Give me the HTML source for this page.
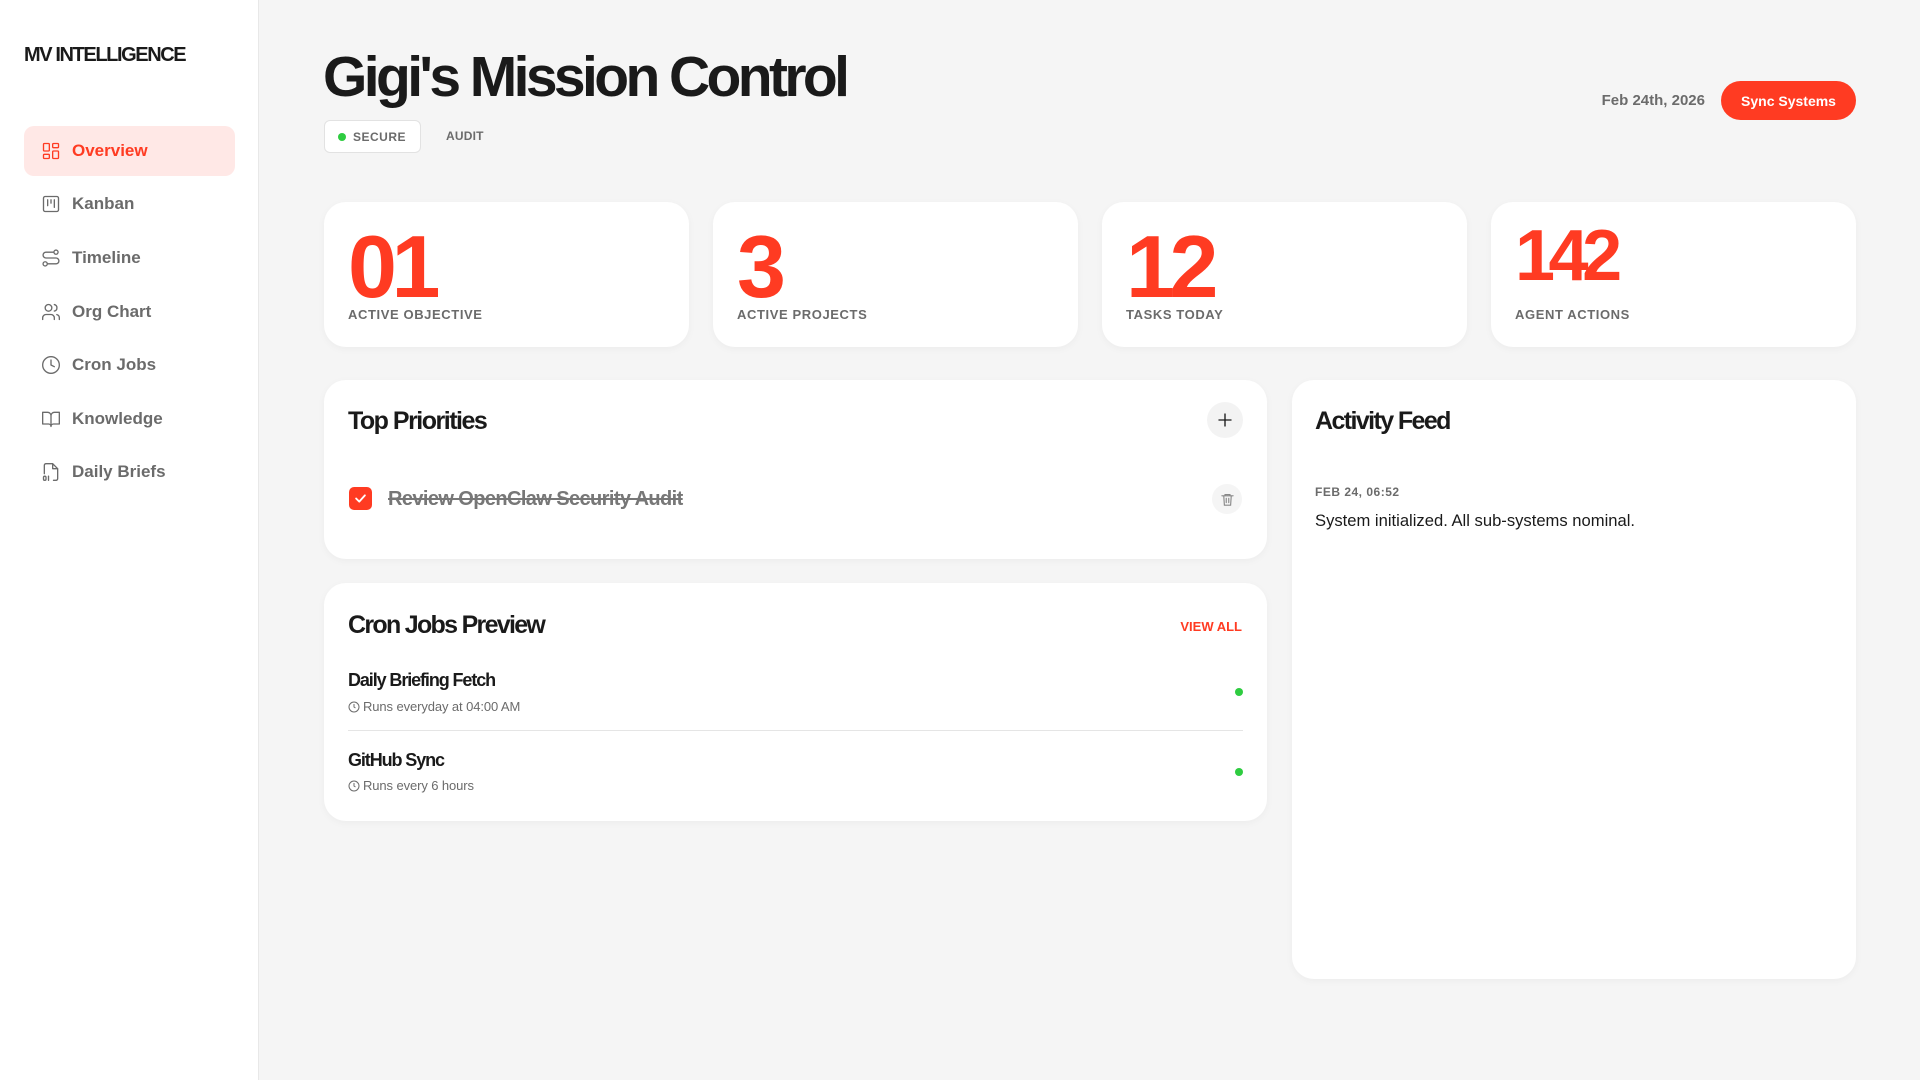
<!DOCTYPE html>
<html><head><meta charset="utf-8"><style>
*{box-sizing:border-box;margin:0;padding:0}
body{width:1920px;height:1080px;background:#f5f5f5;font-family:"Liberation Sans",sans-serif;position:relative;overflow:hidden;color:#1a1a1a}
.abs{position:absolute}
.side{left:0;top:0;width:259px;height:1080px;background:#fff;border-right:1px solid #e8e8e8}
.logo{left:24px;top:44px;font-size:20px;font-weight:700;letter-spacing:-1.4px;color:#1a1a1a}
.nav{left:24px;width:211px;height:50px;border-radius:10px;display:flex;align-items:center;padding-left:17px;font-size:17px;font-weight:700;color:#6b6b6b}
.nav svg{width:20px;height:20px;margin-right:11px;stroke:#6b6b6b;fill:none;stroke-width:1.6;stroke-linecap:round;stroke-linejoin:round}
.nav.act{background:#ffe8e6;color:#ff3b22}
.nav.act svg{stroke:#ff3b22}
.title{left:323px;top:44px;font-size:57px;font-weight:700;letter-spacing:-3.6px;color:#1a1a1a}
.badge{left:324px;top:120px;width:97px;height:33px;border:1px solid #e2e2e2;border-radius:6px;background:#fff;font-size:12px;font-weight:700;color:#6b6b6b;letter-spacing:.5px;display:flex;align-items:center;padding-left:28px}
.badge:before{content:"";position:absolute;left:13px;top:12px;width:8px;height:8px;border-radius:50%;background:#2ecc40}
.card{background:#fff;border-radius:22px;box-shadow:0 2px 8px rgba(0,0,0,.04)}
.num{font-size:88px;font-weight:700;color:#ff3b22;letter-spacing:-5.5px;line-height:1}
.lbl{font-size:13px;font-weight:700;color:#6b6b6b;letter-spacing:.6px}
.h2{font-size:25px;font-weight:700;letter-spacing:-1.5px}
.dot{width:8px;height:8px;border-radius:50%;background:#2ecc40}
</style></head><body>
<div class="abs side"></div>
<div class="abs logo">MV INTELLIGENCE</div>

<div class="abs nav act" style="top:126px"><svg viewBox="0 0 24 24"><rect x="3" y="3" width="7" height="9" rx="1"/><rect x="14" y="3" width="7" height="5" rx="1"/><rect x="14" y="12" width="7" height="9" rx="1"/><rect x="3" y="16" width="7" height="5" rx="1"/></svg>Overview</div>
<div class="abs nav" style="top:179px"><svg viewBox="0 0 24 24"><rect x="3" y="3" width="18" height="18" rx="2"/><path d="M8 7v7M12 7v4M16 7v9"/></svg>Kanban</div>
<div class="abs nav" style="top:233px"><svg viewBox="0 0 24 24"><circle cx="18" cy="5" r="2.5"/><circle cx="5" cy="19" r="2.5"/><path d="M15.5 5H6a3.5 3.5 0 0 0 0 7h12a3.5 3.5 0 0 1 0 7H8"/></svg>Timeline</div>
<div class="abs nav" style="top:287px"><svg viewBox="0 0 24 24"><circle cx="9" cy="7" r="4"/><path d="M2 21v-2a4 4 0 0 1 4-4h6a4 4 0 0 1 4 4v2M16 3.1a4 4 0 0 1 0 7.8M22 21v-2a4 4 0 0 0-3-3.9"/></svg>Org Chart</div>
<div class="abs nav" style="top:340px"><svg viewBox="0 0 24 24"><circle cx="12" cy="12" r="10"/><path d="M12 6v6l4 2"/></svg>Cron Jobs</div>
<div class="abs nav" style="top:394px"><svg viewBox="0 0 24 24"><path d="M2 4h6a4 4 0 0 1 4 4v13a3 3 0 0 0-3-3H2zM22 4h-6a4 4 0 0 0-4 4v13a3 3 0 0 1 3-3h7z"/></svg>Knowledge</div>
<div class="abs nav" style="top:447px"><svg viewBox="0 0 24 24"><path d="M14 2H6a2 2 0 0 0-2 2v10M14 2v6h6M14 2l6 6v12a2 2 0 0 1-2 2h-3"/><rect x="3" y="17" width="3" height="5" rx="1.5"/><path d="M9 17v5"/></svg>Daily Briefs</div>

<div class="abs title">Gigi's Mission Control</div>
<div class="abs badge">SECURE</div>
<div class="abs" style="left:446px;top:129px;font-size:12px;font-weight:700;color:#6b6b6b;letter-spacing:.2px">AUDIT</div>

<div class="abs" style="left:1560px;top:92px;width:145px;text-align:right;font-size:15px;font-weight:700;color:#6b6b6b">Feb 24th, 2026</div>
<div class="abs" style="left:1721px;top:81px;width:135px;height:39px;border-radius:20px;background:#ff3b22;color:#fff;font-size:14px;font-weight:700;display:flex;align-items:center;justify-content:center">Sync Systems</div>

<div class="abs card" style="left:324px;top:202px;width:365px;height:145px"><div class="abs num" style="left:24px;top:21px">01</div><div class="abs lbl" style="left:24px;top:105px">ACTIVE OBJECTIVE</div></div>
<div class="abs card" style="left:713px;top:202px;width:365px;height:145px"><div class="abs num" style="left:24px;top:21px">3</div><div class="abs lbl" style="left:24px;top:105px">ACTIVE PROJECTS</div></div>
<div class="abs card" style="left:1102px;top:202px;width:365px;height:145px"><div class="abs num" style="left:24px;top:21px">12</div><div class="abs lbl" style="left:24px;top:105px">TASKS TODAY</div></div>
<div class="abs card" style="left:1491px;top:202px;width:365px;height:145px"><div class="abs num" style="left:24px;top:18px;font-size:72px;letter-spacing:-6.5px">142</div><div class="abs lbl" style="left:24px;top:105px">AGENT ACTIONS</div></div>

<div class="abs card" style="left:324px;top:380px;width:943px;height:179px">
<div class="abs h2" style="left:24px;top:27px">Top Priorities</div>
<div class="abs" style="left:883px;top:22px;width:36px;height:36px;border-radius:50%;background:#f3f3f3;display:flex;align-items:center;justify-content:center"><svg width="18" height="18" viewBox="0 0 24 24" stroke="#1a1a1a" stroke-width="1.8" fill="none" stroke-linecap="round"><path d="M12 4v16M4 12h16"/></svg></div>
<div class="abs" style="left:25px;top:107px;width:23px;height:23px;border-radius:5px;background:#ff3b22;display:flex;align-items:center;justify-content:center"><svg width="15" height="15" viewBox="0 0 24 24" stroke="#fff" stroke-width="3" fill="none" stroke-linecap="round" stroke-linejoin="round"><path d="M5 12l5 5 9-10"/></svg></div>
<div class="abs" style="left:64px;top:108px;font-size:20px;font-weight:700;color:#777;text-decoration:line-through;letter-spacing:-.6px">Review OpenClaw Security Audit</div>
<div class="abs" style="left:888px;top:104px;width:30px;height:30px;border-radius:50%;background:#f5f5f5;display:flex;align-items:center;justify-content:center"><svg width="15" height="15" viewBox="0 0 24 24" stroke="#888" stroke-width="1.8" fill="none" stroke-linecap="round"><path d="M3 6h18M8 6V4h8v2M6 6l1 15h10l1-15M10 10v7M14 10v7"/></svg></div>
</div>

<div class="abs card" style="left:324px;top:583px;width:943px;height:238px">
<div class="abs h2" style="left:24px;top:28px;letter-spacing:-1.7px">Cron Jobs Preview</div>
<div class="abs" style="left:798px;top:36px;width:120px;text-align:right;font-size:13px;font-weight:700;color:#ff3b22;white-space:nowrap">VIEW ALL</div>
<div class="abs" style="left:24px;top:87px;font-size:18px;font-weight:700;letter-spacing:-1.1px">Daily Briefing Fetch</div>
<div class="abs" style="left:24px;top:116px;font-size:13px;color:#6b6b6b;display:flex;align-items:center;letter-spacing:-.1px"><svg width="12" height="12" viewBox="0 0 24 24" stroke="#6b6b6b" stroke-width="2" fill="none" style="margin-right:3px"><circle cx="12" cy="12" r="10"/><path d="M12 6v6l3 2"/></svg>Runs everyday at 04:00 AM</div>
<div class="abs dot" style="left:911px;top:105px"></div>
<div class="abs" style="left:24px;top:147px;width:895px;height:1px;background:#e5e5e5"></div>
<div class="abs" style="left:24px;top:167px;font-size:18px;font-weight:700;letter-spacing:-1.1px">GitHub Sync</div>
<div class="abs" style="left:24px;top:195px;font-size:13px;color:#6b6b6b;display:flex;align-items:center;letter-spacing:-.1px"><svg width="12" height="12" viewBox="0 0 24 24" stroke="#6b6b6b" stroke-width="2" fill="none" style="margin-right:3px"><circle cx="12" cy="12" r="10"/><path d="M12 6v6l3 2"/></svg>Runs every 6 hours</div>
<div class="abs dot" style="left:911px;top:185px"></div>
</div>

<div class="abs card" style="left:1292px;top:380px;width:564px;height:599px">
<div class="abs h2" style="left:23px;top:27px;letter-spacing:-1.6px">Activity Feed</div>
<div class="abs" style="left:23px;top:105px;font-size:12px;font-weight:700;color:#6b6b6b;letter-spacing:.5px">FEB 24, 06:52</div>
<div class="abs" style="left:23px;top:131px;font-size:16.6px;color:#1a1a1a">System initialized. All sub-systems nominal.</div>
</div>
</body></html>
